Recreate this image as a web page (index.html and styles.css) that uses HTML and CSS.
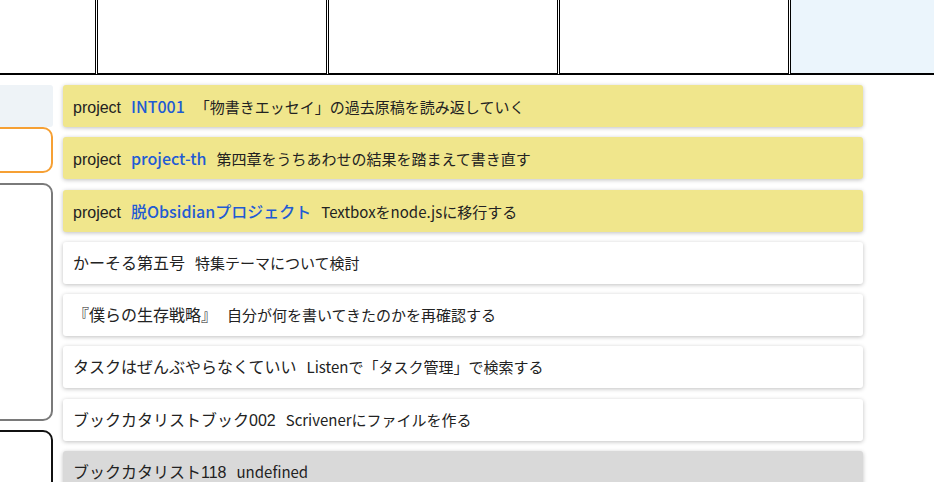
FILE: index.html
```html
<!DOCTYPE html>
<html lang="ja">
<head>
<meta charset="utf-8">
<title>Tasks</title>
<link rel="stylesheet" href="styles.css">
</head>
<body>
<div class="week">
  <div class="day day-clip"></div>
  <div class="day"></div>
  <div class="day"></div>
  <div class="day"></div>
  <div class="day day-today"></div>
</div>
<div class="main">
  <aside class="sidebar">
    <div class="sb-head"></div>
    <div class="sb-box sb-orange"></div>
    <div class="sb-box sb-grey"></div>
    <div class="sb-box sb-black"></div>
  </aside>
  <section class="cards">
    <div class="card card-project"><span class="label">project</span><span class="name">INT001</span><span class="desc">「物書きエッセイ」の過去原稿を読み返していく</span></div>
    <div class="card card-project"><span class="label">project</span><span class="name">project-th</span><span class="desc">第四章をうちあわせの結果を踏まえて書き直す</span></div>
    <div class="card card-project"><span class="label">project</span><span class="name">脱Obsidianプロジェクト</span><span class="desc">Textboxをnode.jsに移行する</span></div>
    <div class="card"><span class="label">かーそる第五号</span><span class="desc">特集テーマについて検討</span></div>
    <div class="card"><span class="label">『僕らの生存戦略』</span><span class="desc">自分が何を書いてきたのかを再確認する</span></div>
    <div class="card"><span class="label">タスクはぜんぶやらなくていい</span><span class="desc">Listenで「タスク管理」で検索する</span></div>
    <div class="card"><span class="label">ブックカタリストブック002</span><span class="desc">Scrivenerにファイルを作る</span></div>
    <div class="card card-done"><span class="label">ブックカタリスト118</span><span class="desc">undefined</span></div>
  </section>
</div>
</body>
</html>
```
FILE: styles.css
```css
html, body {
  margin: 0;
  padding: 0;
  background: #fff;
  overflow: hidden;
}
body {
  font-family: "Noto Sans CJK JP", "Noto Sans", sans-serif;
  color: #222;
  height: 482px;
}
.week {
  display: flex;
  gap: 1px;
  border-bottom: 1px solid #000;
  overflow: hidden;
}
.day {
  flex: 0 0 230px;
  box-sizing: border-box;
  height: 74px;
  border: 1px solid #000;
  border-top: none;
}
.day-clip {
  flex-basis: 96px;
  border-left: none;
}
.day-today {
  background: #ebf5fc;
}
.main {
  display: flex;
  gap: 10px;
  padding-top: 10px;
}
.sidebar {
  flex: 0 0 53px;
  display: flex;
  flex-direction: column;
  align-items: flex-end;
  overflow: hidden;
}
.sb-head,
.sb-box {
  flex: none;
  width: 160px;
  box-sizing: border-box;
}
.sb-head {
  height: 42px;
  background: #eef3f7;
  border-radius: 3px;
}
.sb-box {
  border-radius: 10px;
  background: #fff;
}
.sb-orange {
  height: 46px;
  border: 2px solid #f6a034;
}
.sb-grey {
  height: 238px;
  margin-top: 10px;
  border: 2px solid #7a7a7a;
}
.sb-black {
  height: 120px;
  margin-top: 9px;
  border: 2px solid #111;
}
.cards {
  width: 800px;
  display: flex;
  flex-direction: column;
  gap: 10.29px;
}
.card {
  flex: none;
  height: 42px;
  box-sizing: border-box;
  padding: 0 10px;
  font-size: 15px;
  line-height: 42px;
  background: #fff;
  border-radius: 3px;
  box-shadow: 0 1px 4px rgba(0, 0, 0, 0.25);
  white-space: nowrap;
  overflow: hidden;
}
.card-project {
  background: #f0e68c;
}
.card-done {
  background: #d9d9d9;
}
.label,
.name {
  margin-right: 10px;
}
.label {
  font-family: "Liberation Sans", "Noto Sans CJK JP", sans-serif;
  font-size: 16px;
}
.name {
  font-size: 16px;
  font-weight: 500;
  color: #1f5bd4;
}
.desc {
  font-size: 15px;
}
```
